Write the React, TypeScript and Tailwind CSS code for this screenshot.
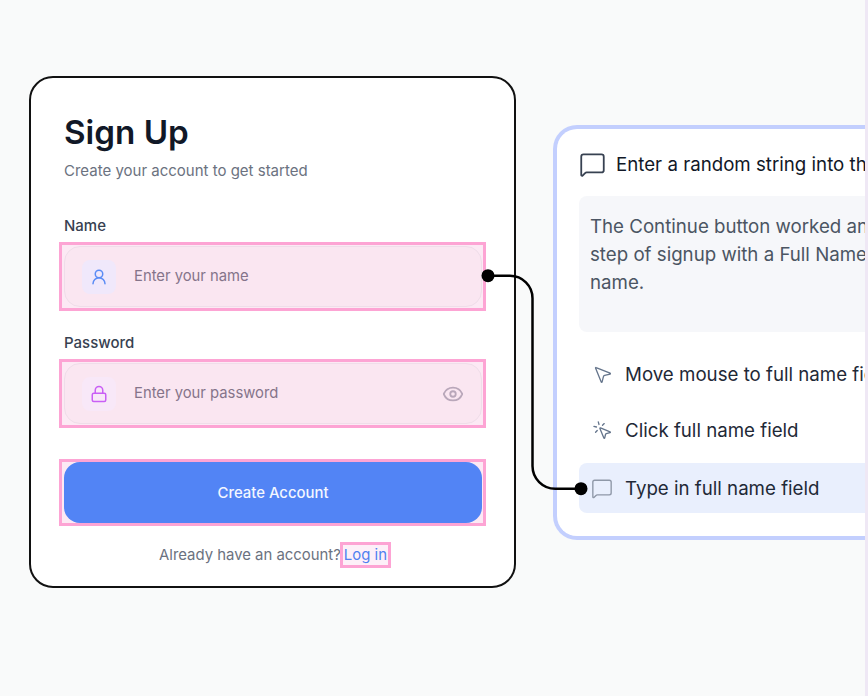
import type { ReactNode } from "react";
import { Eye, Lock, MessageSquare, MousePointer2, MousePointerClick, UserRound } from "lucide-react";

function Field({ label, placeholder, icon, iconBox, trailing }: { label: string; placeholder: string; icon: ReactNode; iconBox: string; trailing?: ReactNode }) {
  return (
    <div>
      <div className="text-[15px] leading-5 font-medium text-[#374151]">{label}</div>
      <div className="relative mt-[10px]">
        <div className="absolute -left-[5px] -right-[4px] -inset-y-[4px] border-[3px] border-[#fda4d4] bg-[#fce9f4]" />
        <div className="relative flex h-[61px] items-center rounded-2xl border border-[#efdde9] bg-[#fae6f1] pl-[17px] pr-[17px]">
          <div className={`flex h-[34px] w-[34px] items-center justify-center rounded-lg ${iconBox}`}>{icon}</div>
          <span className="ml-[18px] flex-1 text-[14.8px] text-[#85748a]">{placeholder}</span>
          {trailing}
        </div>
      </div>
    </div>
  );
}

function Step({ icon, text, active }: { icon: ReactNode; text: string; active?: boolean }) {
  return (
    <div className={`flex h-[50px] items-center rounded-l-lg pl-[12px] ${active ? "bg-[#e9effd]" : ""}`}>
      <div className="flex w-[22px] shrink-0 justify-center">{icon}</div>
      <span className="mt-[2px] ml-[12px] whitespace-nowrap text-[18.7px] text-[#1f2937]">{text}</span>
    </div>
  );
}

export default function App() {
  return (
    <div className="relative flex h-[696px] w-[868px] items-start overflow-hidden bg-[#f9fafa] font-['Inter',sans-serif]">
      <div className="mt-[76px] ml-[29px] h-[512px] w-[487px] shrink-0 rounded-3xl border-2 border-[#111] bg-white pt-[34px] pr-[32px] pl-[33px]">
        <h1 className="text-[33.200px] leading-10 font-semibold text-[#111827]">Sign Up</h1>
        <p className="mt-[9px] text-[15px] leading-5 text-[#6b7280]">Create your account to get started</p>
        <div className="mt-[35px] flex flex-col gap-[26px]">
          <Field label="Name" placeholder="Enter your name" iconBox="bg-[#f0e8fb]" icon={<UserRound size={18} className="text-[#5b8cf5]" />} />
          <Field
            label="Password"
            placeholder="Enter your password"
            iconBox="bg-[#f8e8f8]"
            icon={<Lock size={18} className="text-[#c95ff5]" />}
            trailing={<Eye size={22} className="text-[#b9a7ba]" />}
          />
        </div>
        <div className="relative mt-[38px]">
          <div className="absolute -left-[5px] -right-[4px] -inset-y-[3px] border-[3px] border-[#fda4d4] bg-[#fce9f4]" />
          <button className="relative h-[61px] w-full rounded-2xl bg-[#5284f5] pt-[2px] text-[14.900px] font-medium text-[#f3f6ff]">Create Account</button>
        </div>
        <div className="mt-[22px] flex justify-center text-[14.900px] leading-5 text-[#6b7280]">
          <span>Already have an account?</span>
          <span className="relative ml-[3px]">
            <span className="absolute -inset-x-[4px] -inset-y-[3px] border-[3px] border-[#fda4d4] bg-[#fdf0f8]" />
            <span className="relative text-[#4f80f0]">Log in</span>
          </span>
        </div>
      </div>

      <div className="mt-[125px] ml-[37px] h-[415px] w-[312px] shrink-0 overflow-hidden rounded-l-3xl border-y-4 border-l-4 border-[#c3cffe] bg-white pl-[22px] pt-[20px]">
        <div className="flex h-[31px] items-center">
          <MessageSquare size={27} strokeWidth={1.6} className="shrink-0 text-[#374151]" />
          <span className="mt-[2px] ml-[10px] whitespace-nowrap text-[18.7px] text-[#111827]">Enter a random string into the full name field</span>
        </div>
        <div className="mt-[16px] h-[136px] rounded-l-lg bg-[#f6f7fa] pl-[11px] pt-[17px] text-[18.7px] leading-7 whitespace-nowrap text-[#4b5563]">
          <p>The Continue button worked and took us to the second</p>
          <p>step of signup with a Full Name field asking for a</p>
          <p>name.</p>
        </div>
        <div className="mt-[17px] flex flex-col gap-[6px]">
          <Step icon={<MousePointer2 size={21} strokeWidth={1.5} className="text-[#64748b]" />} text="Move mouse to full name field" />
          <Step icon={<MousePointerClick size={21} strokeWidth={1.5} className="text-[#64748b]" />} text="Click full name field" />
          <div className="mt-[2px]">
            <Step active icon={<MessageSquare size={23} strokeWidth={1.5} className="text-[#8f98a8]" />} text="Type in full name field" />
          </div>
        </div>
      </div>
      <div className="h-full w-[3px] shrink-0 bg-[#efe8f5]" />

      {/* connector from the name field to the step */}
      <svg className="pointer-events-none absolute inset-0" width="868" height="696">
        <path d="M488 275.700 H510 A22.500 22.500 0 0 1 532.500 298.200 V466 A22.700 22.700 0 0 0 555.200 488.700 H581" fill="none" stroke="#000" strokeWidth="2.500" />
        <circle cx="488" cy="275.700" r="6.500" fill="#000" />
        <circle cx="581" cy="488.700" r="6.500" fill="#000" />
      </svg>
    </div>
  );
}
